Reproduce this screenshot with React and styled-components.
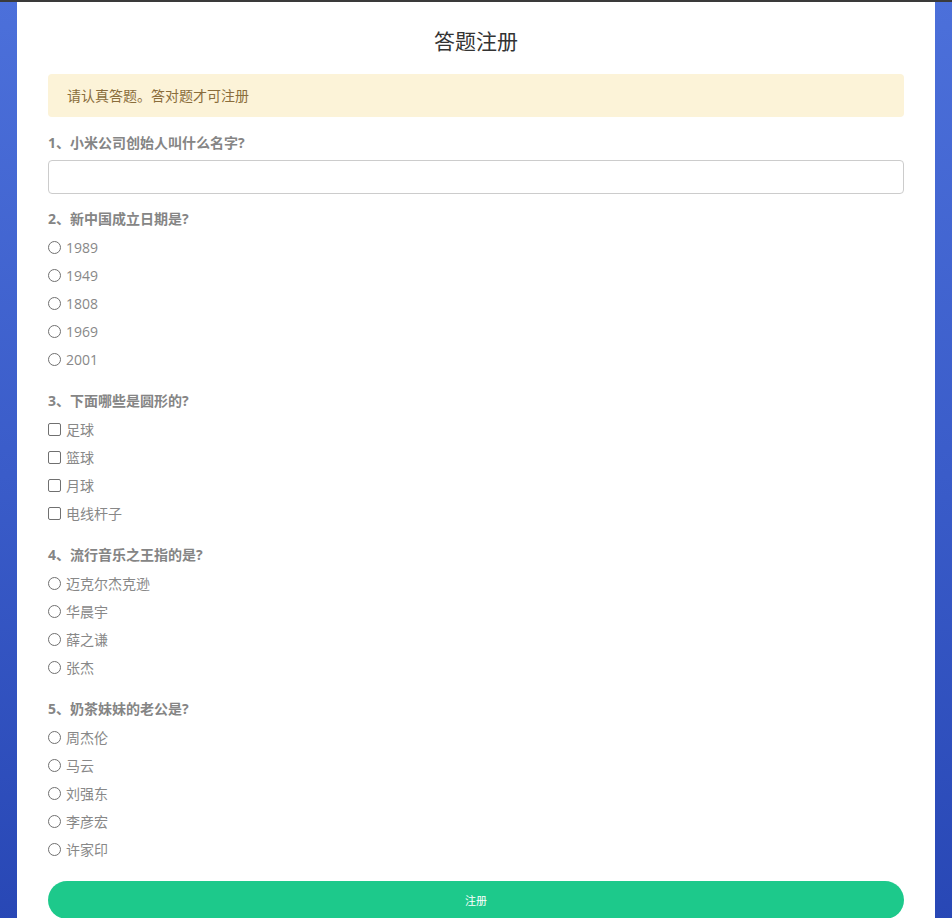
import React from 'react';
import styled, { createGlobalStyle } from 'styled-components';

const GlobalStyle = createGlobalStyle`
    html {
        min-height: 100%;
        background: linear-gradient(180deg, #4c70da 0%, #3a5cc9 50%, #2746b4 100%);
        scrollbar-width: none;
    }
    html::-webkit-scrollbar {
        display: none;
    }
    body {
        margin: 0;
        border-top: 2px solid #3a3a3a;
        padding: 0 17px;
        font-family: "Open Sans", "Noto Sans CJK SC", sans-serif;
        font-size: 14px;
        color: #888;
    }
`;

const Card = styled.form`
    background-color: #fff;
    padding: 24px 31px 30px 31px;
`;

const Title = styled.h3`
    margin: 0 0 18px 0;
    text-align: center;
    font-size: 21px;
    line-height: 30px;
    font-weight: normal;
    color: #333;
`;

const Alert = styled.div`
    background-color: #fcf3d8;
    color: #8a6d3b;
    border-radius: 4px;
    padding: 11px 19px;
    line-height: 21px;
    margin-bottom: 16px;
`;

const Question = styled.div`
    margin-bottom: ${(props) => (props.$input ? '15px' : '18px')};
`;

const Label = styled.div`
    font-weight: bold;
    line-height: 20px;
    color: #858585;
    margin-bottom: ${(props) => (props.$input ? '7px' : '4px')};
`;

const TextInput = styled.input`
    display: block;
    box-sizing: border-box;
    width: 100%;
    height: 34px;
    border: 1px solid #ccc;
    border-radius: 4px;
    padding: 6px 12px;
    font-size: 14px;
    outline: none;
`;

const Option = styled.label`
    display: flex;
    align-items: center;
    height: 28px;
    color: #888;
    cursor: pointer;
`;

const Mark = styled.input`
    appearance: none;
    box-sizing: border-box;
    width: 13px;
    height: 13px;
    margin: 0 5px 0 0;
    border: 1px solid #707070;
    border-radius: ${(props) => (props.type === 'radio' ? '50%' : '2px')};
    background: #fff;
`;

const Submit = styled.button`
    display: block;
    width: 100%;
    height: 38px;
    border: none;
    border-radius: 19px;
    background-color: #1dc98b;
    color: #fff;
    font-family: "Noto Sans CJK SC", sans-serif;
    font-size: 11px;
`;

const questions = [
    { title: '1、小米公司创始人叫什么名字?', type: 'text' },
    { title: '2、新中国成立日期是?', type: 'radio', options: ['1989', '1949', '1808', '1969', '2001'] },
    { title: '3、下面哪些是圆形的?', type: 'checkbox', options: ['足球', '篮球', '月球', '电线杆子'] },
    { title: '4、流行音乐之王指的是?', type: 'radio', options: ['迈克尔杰克逊', '华晨宇', '薛之谦', '张杰'] },
    { title: '5、奶茶妹妹的老公是?', type: 'radio', options: ['周杰伦', '马云', '刘强东', '李彦宏', '许家印'] },
];

const App = () => {
    return (
        <>
            <GlobalStyle />
            <Card onSubmit={(e) => e.preventDefault()}>
                <Title>答题注册</Title>
                <Alert>请认真答题。答对题才可注册</Alert>
                {questions.map((q, i) => (
                    <Question key={i} $input={q.type === 'text'}>
                        <Label $input={q.type === 'text'}>{q.title}</Label>
                        {q.type === 'text' ? (
                            <TextInput type="text" />
                        ) : (
                            q.options.map((opt) => (
                                <Option key={opt}>
                                    <Mark type={q.type} name={'q' + i} />
                                    {opt}
                                </Option>
                            ))
                        )}
                    </Question>
                ))}
                <Submit type="submit">注册</Submit>
            </Card>
        </>
    );
};

export default App;
